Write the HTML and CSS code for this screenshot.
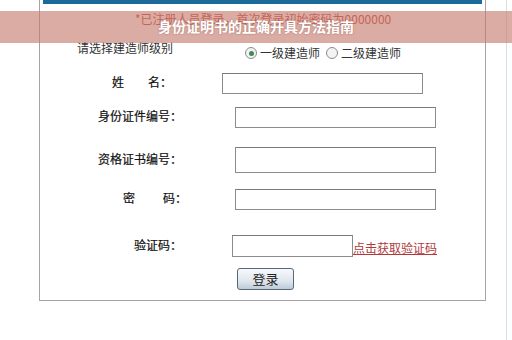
FILE: index.html
```html
<!DOCTYPE html>
<html lang="zh-CN">
<head>
  <meta charset="UTF-8" />
  <meta name="viewport" content="width=device-width, initial-scale=1" />
  <title>身份证明书的正确开具方法指南</title>
  <link rel="stylesheet" href="styles.css">
</head>
<body>
  <div class="page">
    <div class="frame">
      <div class="topbar"></div>
      <p class="notice">*已注册人员登录，首次登录初始密码为0000000</p>

      <div class="level">
        <span class="level-label">请选择建造师级别</span>
        <div class="choices">
          <span class="radio checked"></span><span class="choice-text">一级建造师</span>
          <span class="radio second"></span><span class="choice-text">二级建造师</span>
        </div>
      </div>

      <div class="row row-name">
        <label class="lbl">姓<span class="sp"></span>名：</label>
        <input class="field" type="text">
      </div>
      <div class="row row-id">
        <label class="lbl">身份证件编号：</label>
        <input class="field" type="text">
      </div>
      <div class="row row-cert">
        <label class="lbl">资格证书编号：</label>
        <input class="field tall" type="text">
      </div>
      <div class="row row-pwd">
        <label class="lbl">密<span class="sp wide"></span>码：</label>
        <input class="field" type="password">
      </div>
      <div class="row row-code">
        <label class="lbl">验证码：</label>
        <input class="field short" type="text">
        <a class="code-link" href="#">点击获取验证码</a>
      </div>
      <div class="row row-btn">
        <button class="login">登录</button>
      </div>
    </div>
    <div class="edge"></div>
  </div>

  <div class="banner">身份证明书的正确开具方法指南</div>
</body>
</html>
```

FILE: styles.css
```css
body {
  margin: 0;
  background: #ffffff;
  font-family: "Noto Sans CJK SC", "Noto Sans", sans-serif;
  font-size: 12px;
  color: #222;
}
.page {
  display: flex;
  height: 340px;
  overflow: hidden;
}
.frame {
  margin-left: 39px;
  width: 445px;
  height: 300px;
  border: 1px solid #a5a5a5;
  border-top: none;
}
.topbar {
  height: 4px;
  margin: 0 3px;
  background: #1c6a99;
}
.notice {
  margin: 8px 0 0;
  padding-left: 95px;
  line-height: 14px;
  color: #c9403a;
}
.level {
  display: flex;
  margin-top: 14px;
}
.level-label {
  width: 168px;
  padding-left: 37px;
  line-height: 16px;
  color: #333;
}
.choices {
  display: flex;
  align-items: center;
  padding-top: 5px;
  line-height: 16px;
  color: #333;
}
.radio {
  width: 10px;
  height: 10px;
  border: 1px solid #8d8d8d;
  border-radius: 50%;
  background: #f3f3f3;
  display: flex;
  align-items: center;
  justify-content: center;
}
.radio.checked::after {
  content: "";
  width: 5px;
  height: 5px;
  border-radius: 50%;
  background: #3f8a55;
}
.radio.second {
  margin-left: 6px;
}
.choice-text {
  margin-left: 3px;
}
.row {
  display: flex;
  align-items: center;
}
.lbl {
  width: 142px;
  text-align: right;
  padding-bottom: 4px;
  color: #111;
  -webkit-text-stroke: 0.2px #111;
}
.sp {
  display: inline-block;
  width: 24px;
}
.sp.wide {
  width: 28px;
}
.field {
  margin: 0 0 0 53px;
  width: 195px;
  height: 19px;
  padding: 0 2px;
  box-sizing: content-box;
  border: 1px solid #8c8c8c;
  border-top-color: #7a7a7a;
  background: #fff;
}
.field.tall {
  height: 24px;
}
.field.short {
  width: 115px;
  height: 20px;
  margin-left: 50px;
}
.row-name {
  margin-top: 12px;
}
.row-name .lbl {
  width: 132px;
}
.row-name .field {
  margin-left: 50px;
}
.row-id {
  margin-top: 13px;
}
.row-cert {
  margin-top: 19px;
}
.row-pwd {
  margin-top: 16px;
}
.row-pwd .lbl {
  width: 147px;
}
.row-pwd .field {
  margin-left: 48px;
}
.row-code {
  margin-top: 25px;
}
.code-link {
  align-self: flex-end;
  color: #b2393b;
  text-decoration: underline;
  line-height: 14px;
  margin-bottom: 2px;
}
.row-btn {
  margin-top: 11px;
  padding-left: 197px;
}
.login {
  width: 57px;
  height: 22px;
  padding: 0 0 2px;
  border: 1px solid #56677a;
  border-radius: 3px;
  background: linear-gradient(#f7f9fb, #dfe6ee 60%, #bfcbd8);
  font-family: "Noto Sans CJK SC", sans-serif;
  font-size: 13px;
  color: #222;
}
.edge {
  margin-left: 20px;
  width: 1px;
  background: #cfe2e6;
}
.banner {
  position: absolute;
  top: 11px;
  left: 0;
  width: 512px;
  height: 32px;
  line-height: 31px;
  background: rgba(195, 121, 106, 0.62);
  color: #fff;
  font-weight: bold;
  font-size: 14px;
  text-align: center;
  text-shadow: 0 0 2px rgba(120, 60, 50, 0.5);
}
```
